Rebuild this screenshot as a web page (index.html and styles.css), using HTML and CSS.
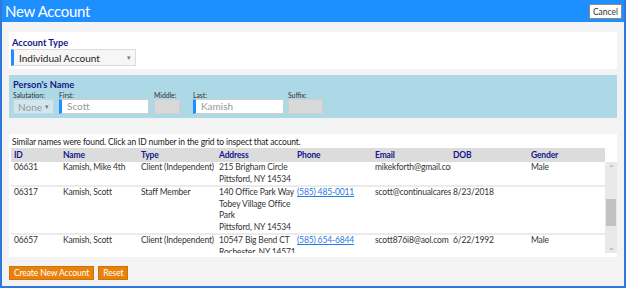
FILE: index.html
```html
<!DOCTYPE html>
<html>
<head>
<title>New Account</title>
<meta charset="UTF-8">
<link rel="stylesheet" href="styles.css">
</head>
<body>

<div class="window">
  <!-- Title bar -->
  <div class="titlebar">
    <span class="title">New Account</span>
    <button class="cancel">Cancel</button>
  </div>

  <div class="content">
    <!-- Account type -->
    <div class="panel type-panel">
      <div class="section-title">Account Type</div>
      <div class="select type-select">
        <span>Individual Account</span><span class="caret">&#9662;</span>
      </div>
    </div>

    <!-- Person's name -->
    <div class="panel name-panel">
      <div class="section-title">Person's Name</div>
      <div class="fields">
        <div class="field sal">
          <label>Salutation:</label>
          <div class="select sal-select"><span>None</span><span class="caret">&#9662;</span></div>
        </div>
        <div class="field first">
          <label>First:</label>
          <div class="input req">Scott</div>
        </div>
        <div class="field middle">
          <label>Middle:</label>
          <div class="input off"></div>
        </div>
        <div class="field last">
          <label>Last:</label>
          <div class="input req">Kamish</div>
        </div>
        <div class="field suffix">
          <label>Suffix:</label>
          <div class="input off"></div>
        </div>
      </div>
    </div>

    <!-- Matches grid -->
    <div class="panel grid-panel">
      <p class="notice">Similar names were found. Click an ID number in the grid to inspect that account.</p>
      <div class="grid">
        <div class="grid-head">
          <div class="row head">
            <div class="c id">ID</div>
            <div class="c">Name</div>
            <div class="c">Type</div>
            <div class="c">Address</div>
            <div class="c">Phone</div>
            <div class="c">Email</div>
            <div class="c">DOB</div>
            <div class="c last-col">Gender</div>
          </div>
          <div class="corner"></div>
        </div>
        <div class="grid-body">
          <div class="rows">
            <div class="row">
              <div class="c id">06631</div>
              <div class="c">Kamish, Mike 4th</div>
              <div class="c">Client (Independent)</div>
              <div class="c">215 Brigham Circle<br>Pittsford, NY 14534</div>
              <div class="c"></div>
              <div class="c">mikekforth@gmail.com</div>
              <div class="c"></div>
              <div class="c last-col">Male</div>
            </div>
            <div class="row">
              <div class="c id">06317</div>
              <div class="c">Kamish, Scott</div>
              <div class="c">Staff Member</div>
              <div class="c">140 Office Park Way<br>Tobey Village Office<br>Park<br>Pittsford, NY 14534</div>
              <div class="c"><a href="#">(585) 485-0011</a></div>
              <div class="c">scott@continualcares.com</div>
              <div class="c">8/23/2018</div>
              <div class="c last-col"></div>
            </div>
            <div class="row">
              <div class="c id">06657</div>
              <div class="c">Kamish, Scott</div>
              <div class="c">Client (Independent)</div>
              <div class="c">10547 Big Bend CT<br>Rochester, NY 14571</div>
              <div class="c"><a href="#">(585) 654-6844</a></div>
              <div class="c">scott876i8@aol.com</div>
              <div class="c">6/22/1992</div>
              <div class="c last-col">Male</div>
            </div>
          </div>
          <!-- fake scrollbar -->
          <div class="scrollbar">
            <span class="arrow">&#8963;</span>
            <div class="thumb"></div>
            <span class="arrow down">&#8964;</span>
          </div>
        </div>
      </div>
    </div>

    <div class="actions">
      <button class="orange">Create New Account</button>
      <button class="orange">Reset</button>
    </div>
  </div>
</div>

</body>
</html>
```

FILE: styles.css
```css
* {
  box-sizing: border-box;
}

body {
  margin: 0;
  font-family: Lato, "Open Sans", sans-serif;
  color: #333;
}

/* outer window */
.window {
  width: 626px;
  height: 288px;
  border: 2px solid #2f78dc;
  border-top: none;
  display: flex;
  flex-direction: column;
  background: #f3f3f3;
}

.titlebar {
  height: 22px;
  background: #1e8fff;
  display: flex;
  align-items: center;
  justify-content: space-between;
  padding: 0 2px 0 3px;
}

.title {
  color: white;
  font-size: 15px;
  letter-spacing: -0.3px;
  line-height: 22px;
}

.cancel {
  height: 15px;
  width: 33px;
  padding: 0;
  margin-top: 1px;
  background: white;
  border: 1px solid #8a8a8a;
  font-family: inherit;
  font-size: 8.5px;
  color: #333;
}

.content {
  flex: 1;
  padding: 10px 7px 0 7px;
}

.panel {
  background: white;
}

.section-title {
  color: #15158a;
  font-weight: bold;
  font-size: 9.3px;
  line-height: 13px;
}

/* Account type */
.type-panel {
  height: 37px;
  padding: 4px 3px 0 2px;
}

.type-panel .section-title {
  padding-left: 1px;
}

.select {
  display: flex;
  align-items: center;
  justify-content: space-between;
  border: 1px solid #dcdcdc;
  font-size: 10px;
}

.caret {
  font-size: 7px;
  color: #777;
}

.type-select {
  width: 125px;
  height: 17px;
  background: #f6f6f6;
  border-left: 3px solid #1e8fff;
  padding: 0 4px 0 5px;
  color: #222;
}

/* Person's name */
.name-panel {
  margin-top: 6px;
  height: 43px;
  background: #add8e6;
  padding: 4px 4px 0 4px;
}

.name-panel .section-title {
  line-height: 12px;
}

.fields {
  display: flex;
}

.field label {
  display: block;
  font-size: 6.8px;
  line-height: 8px;
  color: #333;
}

.sal { width: 41px; margin-right: 5px; }
.first { width: 90px; margin-right: 5px; }
.middle { width: 26px; margin-right: 13px; }
.last { width: 91px; margin-right: 4px; }
.suffix { width: 35px; }

.sal-select {
  height: 15px;
  background: #d3e6ed;
  border-color: #c3d6de;
  color: #8f9aa0;
  padding: 0 4px 0 4px;
}

.input {
  height: 15px;
  border: 1px solid #cfcfcf;
  font-size: 10px;
  line-height: 13px;
  color: #999;
  padding-left: 5px;
}

.input.req {
  background: white;
  border-left: 3px solid #1e8fff;
}

.input.off {
  background: #d9d9d9;
}

/* Grid of similar names */
.grid-panel {
  margin-top: 16px;
  height: 123px;
  padding: 2px 2px 0 2px;
}

.notice {
  margin: 0 0 0 1px;
  font-size: 8.5px;
  line-height: 12px;
  letter-spacing: -0.15px;
  color: #222;
}

.grid {
  width: 606px;
}

.grid-head {
  display: flex;
}

.corner {
  width: 12px;
  background: white;
}

.grid-body {
  display: flex;
  height: 91px;
}

.rows {
  width: 594px;
  overflow: hidden;
}

.row {
  display: flex;
  font-size: 8.5px;
  line-height: 11.5px;
  letter-spacing: -0.15px;
  color: #333;
  border-bottom: 2px solid #ebebeb;
}

.row.head {
  width: 594px;
  background: #dcdcdc;
  border-bottom: none;
  color: #15158a;
  font-weight: bold;
  height: 14px;
  line-height: 14px;
}

/* line breaks in cells are explicit, long values get clipped */
.c {
  width: 78px;
  padding-left: 2px;
  overflow: hidden;
  white-space: nowrap;
}

.c.id {
  width: 50px;
  padding-left: 3px;
}

.c.last-col {
  width: 76px;
}

.c a {
  color: #2a7ae2;
}

.scrollbar {
  width: 12px;
  background: #e9e9e9;
  display: flex;
  flex-direction: column;
  align-items: center;
  position: relative;
}

.arrow {
  font-size: 8px;
  line-height: 12px;
  color: #9a9a9a;
}

.arrow.down {
  position: absolute;
  bottom: 0;
}

.thumb {
  margin-top: 25px;
  width: 10px;
  height: 27px;
  background: #c2c2c2;
}

/* bottom buttons */
.actions {
  display: flex;
  gap: 4px;
  margin-top: 9px;
}

.orange {
  height: 14px;
  padding: 0 4px;
  background: #e8820c;
  border: 1px solid #d27200;
  color: white;
  font-family: inherit;
  font-size: 8.5px;
  letter-spacing: -0.1px;
  line-height: 12px;
}
```
